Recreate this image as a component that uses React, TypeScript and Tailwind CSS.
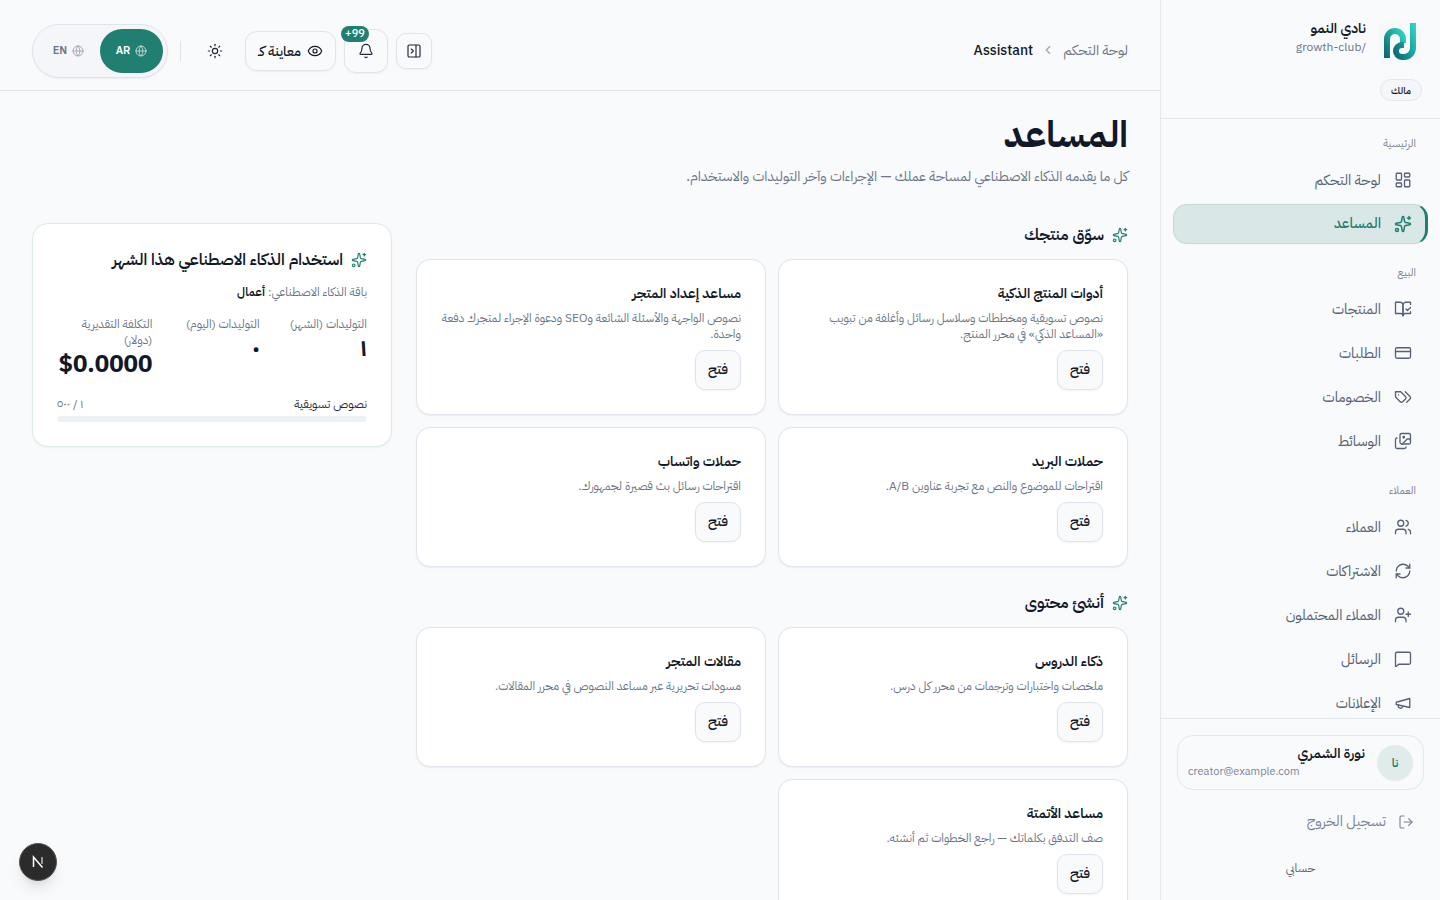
import React from "react";
import { LayoutDashboard, Sparkles, CreditCard, Images, Users, RefreshCw, UserPlus, MessageSquare, LogOut, Bell, Eye, Sun, PanelRightClose, Globe, ChevronLeft } from "lucide-react";

function Glyph({ size = 18, children, className }: { size?: number; children: React.ReactNode; className?: string }) {
  return (
    <svg width={size} height={size} viewBox="0 0 24 24" fill="none" stroke="currentColor" strokeWidth={1.75} strokeLinecap="round" strokeLinejoin="round" className={className}>
      {children}
    </svg>
  );
}

const BookCheckIcon = ({ size, className }: any) => (
  <Glyph size={size} className={className}>
    <path d="M8 3H2v15h7c1.7 0 3 1.3 3 3V7c0-2.2-1.8-4-4-4Z" />
    <path d="m16 12 2 2 4-4" />
    <path d="M22 6V3h-6c-2.2 0-4 1.8-4 4v14c0-1.7 1.3-3 3-3h7v-2.3" />
  </Glyph>
);
const TagsIcon = ({ size, className }: any) => (
  <Glyph size={size} className={className}>
    <path d="M9 5H2v7l6.29 6.29c.94.94 2.48.94 3.42 0l3.58-3.58c.94-.94.94-2.48 0-3.42L9 5Z" />
    <path d="M6 9.01V9" />
    <path d="m15 5 6.3 6.3a2.4 2.4 0 0 1 0 3.4L17 19" />
  </Glyph>
);
const MegaphoneIcon = ({ size, className }: any) => (
  <Glyph size={size} className={className}>
    <path d="m3 11 18-5v12L3 14v-3z" />
    <path d="M11.6 16.8a3 3 0 1 1-5.8-1.6" />
  </Glyph>
);

function NavItem({ icon: Icon, label, active }: { icon: any; label: string; active?: boolean }) {
  if (active) {
    return (
      <div className="h-10 mx-3 flex items-center gap-[13px] pr-[13px] pl-4 rounded-[14px] bg-[#d9e8e6] border border-[#c2dad6] border-r-[3px] border-r-[#217f71] text-[#217f71] font-medium text-[14.4px]">
        <Icon size={18} strokeWidth={2} className="shrink-0" />
        <span>{label}</span>
      </div>
    );
  }
  return (
    <div className="h-10 mx-3 flex items-center gap-[13px] px-4 text-[#566175] text-[14.4px]">
      <Icon size={18} strokeWidth={1.75} className="shrink-0" />
      <span className="mt-[2px]">{label}</span>
    </div>
  );
}

function SectionLabel({ children, className }: { children: React.ReactNode; className: string }) {
  return <div className={"px-6 text-[11px] text-[#7a8496] leading-4 " + className}>{children}</div>;
}

function ToolCard({ title, desc, h }: { title: string; desc: string; h: string }) {
  return (
    <div className={"bg-white border border-[#dfe4ec] rounded-[14px] shadow-[0_1px_2px_rgba(15,23,42,0.05)] px-6 pt-6 flex flex-col items-start " + h}>
      <div className="text-[14px] font-semibold text-[#111827] leading-5">{title}</div>
      <p className="mt-[6px] text-[12px] leading-4 text-[#6b7688]">{desc}</p>
      <button className="mt-2 w-[46px] h-10 pb-[2px] rounded-[10px] border border-[#dfe4ec] bg-[#f8fafc] text-[14px] text-[#111827] font-medium shadow-[0_1px_2px_rgba(15,23,42,0.05)]">فتح</button>
    </div>
  );
}

function SectionHead({ title }: { title: string }) {
  return (
    <div className="flex items-center gap-2 h-6">
      <Sparkles size={16} strokeWidth={1.75} className="text-[#217f71]" />
      <h2 className="text-[16px] font-semibold text-[#111827]">{title}</h2>
    </div>
  );
}

export default function App() {
  return (
    <div dir="rtl" className="h-screen w-full overflow-hidden flex bg-[#f9fafc] [font-family:'IBM_Plex_Sans_Arabic',sans-serif] text-[#111827]">
      <aside className="w-[280px] shrink-0 h-full flex flex-col border-l border-[#e3e7ee]">
        <div className="h-[119px] shrink-0 border-b border-[#e3e7ee] pr-[19px] pt-5">
          <div className="flex items-start gap-3">
            <div className="w-[43px] h-[43px] rounded-[10px] bg-[#f6f8fa] flex items-center justify-center shrink-0">
              <svg width="32" height="38" viewBox="0 0 32 38" className="mb-[2px]">
                <defs>
                  <linearGradient id="lg" x1="0" y1="1" x2="1" y2="0">
                    <stop offset="0" stopColor="#0b6a70" />
                    <stop offset="1" stopColor="#2dd4c4" />
                  </linearGradient>
                </defs>
                <path d="M3 36V17a8 8 0 0 1 16 0v4" fill="none" stroke="url(#lg)" strokeWidth="6" />
                <path d="M29 1v25a9 9 0 0 1-9 9h-2a6 6 0 0 1 0-12h2" fill="none" stroke="url(#lg)" strokeWidth="6" />
              </svg>
            </div>
            <div>
              <div className="text-[14px] font-semibold text-[#111827] leading-[18px]">نادي النمو</div>
              <div className="text-[12px] text-[#6b7688] leading-[18px]">/growth-club</div>
            </div>
          </div>
          <div className="mt-4 -mr-px inline-flex h-[22px] items-center px-[10px] rounded-full border border-[#e3e7ee] bg-[#f5f6f9] text-[10px] font-medium text-[#111827]">مالك</div>
        </div>
        <nav className="flex-1 overflow-hidden">
          <SectionLabel className="mt-[17px]">الرئيسية</SectionLabel>
          <div className="mt-2 flex flex-col gap-1">
            <NavItem icon={LayoutDashboard} label="لوحة التحكم" />
            <NavItem icon={Sparkles} label="المساعد" active />
          </div>
          <SectionLabel className="mt-[21px]">البيع</SectionLabel>
          <div className="mt-2 flex flex-col gap-1">
            <NavItem icon={BookCheckIcon} label="المنتجات" />
            <NavItem icon={CreditCard} label="الطلبات" />
            <NavItem icon={TagsIcon} label="الخصومات" />
            <NavItem icon={Images} label="الوسائط" />
          </div>
          <SectionLabel className="mt-[22px]">العملاء</SectionLabel>
          <div className="mt-2 flex flex-col gap-1">
            <NavItem icon={Users} label="العملاء" />
            <NavItem icon={RefreshCw} label="الاشتراكات" />
            <NavItem icon={UserPlus} label="العملاء المحتملون" />
            <NavItem icon={MessageSquare} label="الرسائل" />
            <NavItem icon={MegaphoneIcon} label="الإعلانات" />
          </div>
        </nav>
        <div className="h-[182px] shrink-0 border-t border-[#e3e7ee] px-4 pt-4">
          <div className="h-[55px] rounded-[16px] border border-[#e3e7ee] flex items-center gap-3 px-[10px]">
            <div className="w-9 h-9 rounded-full bg-[#e0ecea] flex items-center justify-center text-[12px] font-semibold text-[#217f71]">نا</div>
            <div className="flex-1 mb-[2px]">
              <div className="text-[14px] font-semibold text-[#111827] leading-5">نورة الشمري</div>
              <div className="text-[11px] text-[#7a8496] leading-4 text-left">creator@example.com</div>
            </div>
          </div>
          <div className="mt-3 h-10 flex items-center gap-3 px-[10px] text-[#7a8496] text-[14.4px]">
            <LogOut size={16} strokeWidth={1.75} />
            <span>تسجيل الخروج</span>
          </div>
          <div className="mt-[6px] h-10 flex items-center justify-center text-[12px] text-[#566175]">حسابي</div>
        </div>
      </aside>

      <main className="flex-1 min-w-0 h-full overflow-hidden relative">
        <header className="h-[91px] border-b border-[#dfe4ec] flex items-center justify-between px-8 pt-3">
          <div className="flex items-center gap-2 text-[14px] mb-[2px]">
            <span className="text-[#6b7688]">لوحة التحكم</span>
            <ChevronLeft size={14} className="text-[#9aa3b2]" />
            <span className="font-medium text-[#111827]">Assistant</span>
          </div>
          <div className="flex items-center">
            <button className="w-9 h-9 rounded-[10px] border border-[#dfe4ec] flex items-center justify-center shadow-[0_1px_2px_rgba(15,23,42,0.05)]">
              <PanelRightClose size={16} strokeWidth={1.75} className="text-[#1f2937]" />
            </button>
            <div className="relative mr-2">
              <button className="w-11 h-11 rounded-[12px] border border-[#dfe4ec] flex items-center justify-center shadow-[0_1px_2px_rgba(15,23,42,0.05)]">
                <Bell size={16} strokeWidth={1.75} className="text-[#1f2937]" />
              </button>
              <span className="absolute -top-[3px] -left-[3px] w-[28px] h-4 text-center rounded-full bg-[#217f71] text-white text-[11px] font-medium leading-4">99+</span>
            </div>
            <button className="mr-2 h-10 w-[91px] rounded-[12px] border border-[#dfe4ec] flex items-center justify-center gap-[6px] text-[14px] font-medium shadow-[0_1px_2px_rgba(15,23,42,0.05)]">
              <Eye size={16} strokeWidth={1.75} />
              <span>معاينة كـ</span>
            </button>
            <div className="mr-3 w-9 h-9 flex items-center justify-center">
              <Sun size={16} strokeWidth={1.75} className="text-[#1f2937]" />
            </div>
            <div className="mr-4 ml-3 w-px h-5 bg-[#dfe4ec]" />
            <div className="h-[54px] w-[136px] rounded-full border border-[#dfe4ec] bg-[#f5f6f9] p-1 flex items-center shadow-[0_1px_2px_rgba(15,23,42,0.05)]">
              <div className="w-[63px] h-[44px] rounded-full bg-[#217f71] text-white flex items-center justify-center gap-[5px] text-[11px] font-semibold">
                <Globe size={12} className="text-[#b8d6d1]" /><span>AR</span>
              </div>
              <div className="flex-1 flex items-center justify-center gap-[5px] text-[11px] font-semibold text-[#6b7688]">
                <Globe size={12} className="text-[#a3abb8]" /><span>EN</span>
              </div>
            </div>
          </div>
        </header>

        <div className="px-8 pt-5">
          <h1 className="text-[36px] font-bold leading-[48px] text-[#111827]">المساعد</h1>
          <p className="mt-[6px] text-[14px] leading-6 text-[#6b7688]">كل ما يقدمه الذكاء الاصطناعي لمساحة عملك — الإجراءات وآخر التوليدات والاستخدام.</p>

          <div className="mt-[34px] flex items-start gap-6">
            <div className="w-[712px] shrink-0">
              <SectionHead title="سوّق منتجك" />
              <div className="mt-3 grid grid-cols-2 gap-3">
                <ToolCard h="h-[156px]" title="أدوات المنتج الذكية" desc="نصوص تسويقية ومخططات وسلاسل رسائل وأغلفة من تبويب «المساعد الذكي» في محرر المنتج." />
                <ToolCard h="h-[156px]" title="مساعد إعداد المتجر" desc="نصوص الواجهة والأسئلة الشائعة وSEO ودعوة الإجراء لمتجرك دفعة واحدة." />
                <ToolCard h="h-[140px]" title="حملات البريد" desc="اقتراحات للموضوع والنص مع تجربة عناوين A/B." />
                <ToolCard h="h-[140px]" title="حملات واتساب" desc="اقتراحات رسائل بث قصيرة لجمهورك." />
              </div>
              <div className="mt-6">
                <SectionHead title="أنشئ محتوى" />
              </div>
              <div className="mt-3 grid grid-cols-2 gap-3">
                <ToolCard h="h-[140px]" title="ذكاء الدروس" desc="ملخصات واختبارات وترجمات من محرر كل درس." />
                <ToolCard h="h-[140px]" title="مقالات المتجر" desc="مسودات تحريرية عبر مساعد النصوص في محرر المقالات." />
                <ToolCard h="h-[140px]" title="مساعد الأتمتة" desc="صف التدفق بكلماتك — راجع الخطوات ثم أنشئه." />
              </div>
            </div>
            <div className="w-[360px] shrink-0 bg-white border border-[#dcebe8] rounded-[16px] shadow-[0_1px_2px_rgba(15,23,42,0.05)] p-6">
              <div className="flex items-center gap-2">
                <Sparkles size={16} strokeWidth={1.75} className="text-[#217f71]" />
                <h3 className="text-[16px] font-semibold leading-6">استخدام الذكاء الاصطناعي هذا الشهر</h3>
              </div>
              <div className="mt-[10px] text-[12px] leading-5 text-[#6b7688]">باقة الذكاء الاصطناعي: <b className="font-semibold text-[#111827]">أعمال</b></div>
              <div className="mt-[14px] grid grid-cols-3 gap-3 text-[12px] leading-4 text-[#6b7688]">
                <div>
                  <div>التوليدات (الشهر)</div>
                  <div className="text-[24px] font-bold leading-8 text-[#111827]">١</div>
                </div>
                <div>
                  <div>التوليدات (اليوم)</div>
                  <div className="text-[24px] font-bold leading-8 text-[#111827]">٠</div>
                </div>
                <div>
                  <div>التكلفة التقديرية (دولار)</div>
                  <div className="text-[24px] font-bold leading-8 text-[#111827]">$0.0000</div>
                </div>
              </div>
              <div className="mt-4 flex justify-between items-center text-[12px] leading-4">
                <span className="text-[#1f2937]">نصوص تسويقية</span>
                <span className="text-[12px] text-[#6b7688]">١ / ٥٠٠</span>
              </div>
              <div className="mt-1 h-[6px] rounded-full bg-[#eef1f4]" />
            </div>
          </div>
        </div>

        <div className="absolute left-[19px] bottom-[19px] w-[38px] h-[38px] rounded-full bg-[#2b2b2b] border border-[#555] shadow-lg flex items-center justify-center">
          <svg width="16" height="16" viewBox="0 0 16 16" fill="none">
            <path d="M3.5 13V3L12.5 13.5" stroke="#fff" strokeWidth="1.5" />
            <path d="M12 3v7" stroke="#bbb" strokeWidth="1.5" />
          </svg>
        </div>
      </main>
    </div>
  );
}
